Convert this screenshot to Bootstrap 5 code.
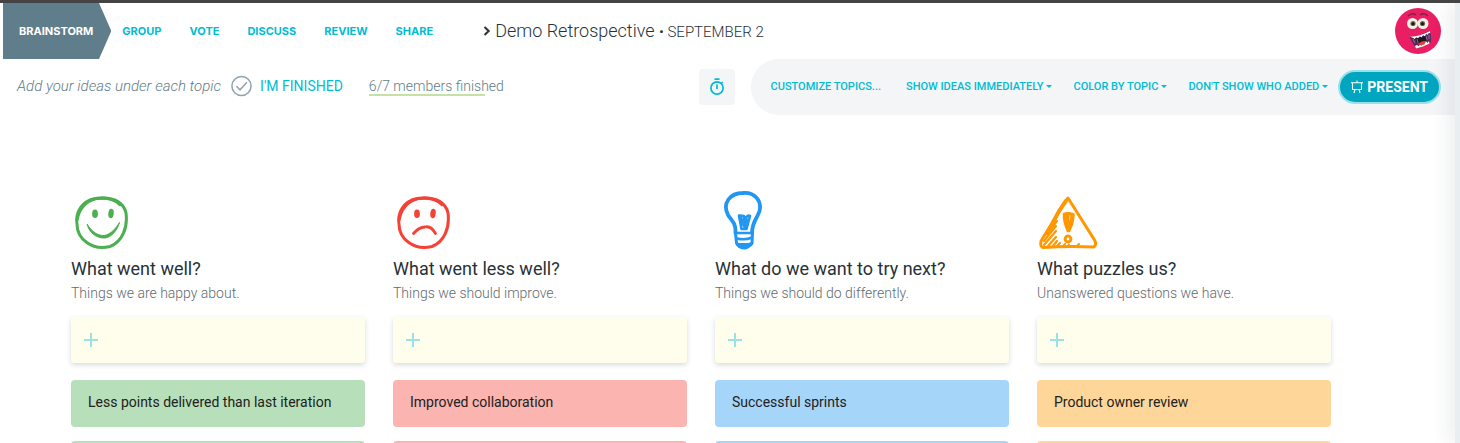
<!DOCTYPE html>
<html lang="en">
<head>
<meta charset="utf-8">
<meta name="viewport" content="width=device-width, initial-scale=1">
<title>Demo Retrospective</title>
<link rel="stylesheet" href="https://cdn.jsdelivr.net/npm/bootstrap@5.3.0/dist/css/bootstrap.min.css">
<style>
  :root { --accent: #00bcd4; --slate: #607d8b; --ink: #263238; --panel: #f3f5f7; }
  body { font-family: Roboto, "Liberation Sans", sans-serif; color: var(--ink); background: #fff; }
  a { color: var(--accent); }
  svg { display: block; flex: none; }
  .app-shell { border-top: 3px solid #444; }
  .side-drawer { width: 5px; background: #e9eef1; box-shadow: 0 0 20px rgba(38, 50, 56, .3); }

  .step-bar { height: 56px; padding-left: 3px; padding-right: 14px; }
  .steps a { font-family: Inter, sans-serif; font-size: 11px; font-weight: 700; line-height: 56px; margin-left: 28px; }
  .steps a.step-now { color: #fff; background: var(--slate); margin-left: 0; margin-right: -17px; padding: 0 18px 0 16px;
    clip-path: polygon(0 0, 96px 0, 100% 50%, 96px 100%, 0 100%); }
  .session-title { font-size: 18px; font-weight: 300; line-height: 24px; margin-left: 50px; }
  .session-date { font-size: 15px; }

  .tool-bar { height: 56px; padding-left: 17px; }
  .hint { font-size: 15px; line-height: 20px; font-weight: 300; font-style: italic; color: var(--slate); }
  .finish-btn { font-size: 14px; line-height: 20px; color: var(--accent); margin-left: 10px; }
  .status-line { padding-bottom: 2px; }
  .member-count { font-size: 14px; font-weight: 300; line-height: 20px; color: var(--slate); margin-left: 26px;
    background: linear-gradient(#c5e1a5, #c5e1a5) left bottom / 86% 2px no-repeat; }
  .timer-btn { width: 36px; height: 36px; background: var(--panel); margin-right: 16px; }
  .options { background: var(--panel); border-radius: 28px 0 0 28px; padding-left: 20px; padding-right: 14px; }
  .option-btn { font-size: 11px; font-weight: 500; color: var(--accent); margin-right: 21px; }
  .option-btn.option-wide { margin-right: 25px; }
  .option-btn.dropdown-toggle::after { margin-left: 3px; vertical-align: 2px; border-width: 3px; border-bottom: 0; }
  .present-btn { height: 34px; font-size: 14px; font-weight: 700; color: #fff; background: #00a5c0;
    border: 2px solid #99e0ea; border-radius: 17px; padding: 0 11px; margin-left: -11px; }

  .board { padding: 76px 124px 0 71px; scrollbar-width: none; }
  .board-grid { display: grid; grid-template-columns: repeat(4, 1fr); gap: 28px; }
  .topic-name { font-size: 18px; font-weight: 400; line-height: 24px; margin: 6px 0 0; }
  .topic-note { font-size: 14px; font-weight: 300; line-height: 20px; color: #5f6b70; margin: 2px 0 14px; }
  .add-idea { height: 46px; background: #fffeec; border-radius: 3px; padding: 0 13px; box-shadow: 0 2px 5px rgba(38, 50, 56, .18); margin-bottom: 17px; }
  .add-idea input { background: none; outline: 0; min-width: 0; font-size: 14px; }
  .idea { font-size: 14px; line-height: 20px; color: #212121; border-radius: 4px; padding: 12px 17px 15px; margin-bottom: 14px; }
  .topic-well .idea { background: #b7dfb9; }
  .topic-less .idea { background: #fbb4b0; }
  .topic-next .idea { background: #a6d5fa; }
  .topic-puzzle .idea { background: #ffd699; }
</style>
</head>
<body>
<div class="app-shell d-flex vh-100 overflow-hidden">
  <div class="d-flex flex-column flex-grow-1 overflow-hidden">
    <header class="step-bar d-flex align-items-center flex-shrink-0">
      <nav class="steps d-flex" aria-label="Steps">
        <a href="#brainstorm" class="step-now text-decoration-none" aria-current="step">BRAINSTORM</a>
        <a href="#group" class="text-decoration-none">GROUP</a>
        <a href="#vote" class="text-decoration-none">VOTE</a>
        <a href="#discuss" class="text-decoration-none">DISCUSS</a>
        <a href="#review" class="text-decoration-none">REVIEW</a>
        <a href="#share" class="text-decoration-none">SHARE</a>
      </nav>
      <h1 class="session-title d-flex align-items-center mb-0">
        <svg width="8" height="10" viewBox="0 0 8 10" class="me-1" fill="none" stroke="#263238" stroke-width="2" aria-hidden="true"><path d="M1.500 1 5.700 5 1.500 9"/></svg>
        <span>Demo Retrospective <span class="session-date">• SEPTEMBER 2</span></span>
      </h1>
      <button type="button" class="btn p-0 border-0 rounded-circle ms-auto" aria-label="Account">
        <svg width="46" height="46" viewBox="0 0 46 46" aria-hidden="true">
          <circle cx="23" cy="23" r="23" fill="#e91e63"/>
          <path d="M13 8q4-4 8-1M25 7q4-3 8 1" fill="none" stroke="#80223f" stroke-width="1.300"/>
          <circle cx="17.500" cy="15.500" r="5.500" fill="#f2f0e6"/><circle cx="28" cy="15.500" r="5.500" fill="#f2f0e6"/>
          <circle cx="18" cy="15.500" r="2.600" fill="#6d6a4c"/><circle cx="27.500" cy="15.500" r="2.600" fill="#6d6a4c"/>
          <circle cx="18" cy="15.700" r="1.500" fill="#15151a"/><circle cx="27.500" cy="15.700" r="1.500" fill="#15151a"/>
          <path d="M14.500 29Q26 28 35 22.500 37 31 35.500 35 27 39 21 40.500 17 34 14.500 29Z" fill="#5a2a5c"/>
          <path d="M20 30.500 31 27.500 32 32 26 35 22 35Z" fill="#20141f"/>
          <path d="M15 28.800Q26 28 35 23L35.300 25.300 33.500 25 33 26.800 31 26 30 28.200 28 27.200 26.500 29.400 25 28.300 23 30.300 21.500 29.300 19.500 31 18.500 30Z" fill="#fff"/>
          <path d="M18 31 20 35M22 31 23 35M31 28 32 32M34 27 34 31" stroke="#a77bb0" stroke-width=".8"/>
          <path d="M23 36Q27 32 32 33.500L31 37 25 39Z" fill="#d9413d"/>
          <path d="M20 38 22 37 23.500 38.300 25 37 26.500 37.800 28 36.500 29 37 31 33.500 32.500 35 34 33 34.500 35.500 28 38.500 21 40.500Z" fill="#fff"/>
        </svg>
      </button>
    </header>

    <div class="tool-bar d-flex align-items-stretch flex-shrink-0">
      <div class="d-flex align-items-center flex-grow-1 text-nowrap">
        <div class="status-line d-flex align-items-center">
          <span class="hint">Add your ideas under each topic</span>
          <button type="button" class="finish-btn btn p-0 border-0 d-flex align-items-center gap-2">
            <svg width="21" height="22" viewBox="0 0 21 22" fill="none" stroke="#90a4ae" stroke-width="1.500" aria-hidden="true"><circle cx="10.500" cy="11" r="9.600"/><path d="M5.500 11.300 9 14.800 16 7.300"/></svg>
            I'M FINISHED
          </button>
          <span class="member-count">6/7 members finished</span>
        </div>
        <button type="button" class="timer-btn btn p-0 border-0 rounded-1 ms-auto d-flex align-items-center justify-content-center" aria-label="Timer">
          <svg width="16" height="18" viewBox="0 0 16 18" fill="none" stroke="#00bcd4" stroke-width="1.700" aria-hidden="true"><circle cx="8" cy="10" r="6.100"/><path d="M5.500 1.200h5M8 6.500V11M12.400 5.300 13.700 4"/></svg>
        </button>
      </div>
      <div class="options d-flex align-items-center text-nowrap">
        <button type="button" class="option-btn option-wide btn p-0 border-0">CUSTOMIZE TOPICS...</button>
        <button type="button" class="option-btn btn p-0 border-0 dropdown-toggle">SHOW IDEAS IMMEDIATELY</button>
        <button type="button" class="option-btn btn p-0 border-0 dropdown-toggle">COLOR BY TOPIC</button>
        <button type="button" class="option-btn btn p-0 border-0 dropdown-toggle">DON'T SHOW WHO ADDED</button>
        <button type="button" class="present-btn btn d-flex align-items-center gap-1">
          <svg width="12" height="14" viewBox="0 0 12 14" fill="none" stroke="#fff" stroke-width="1.100" aria-hidden="true"><path d="M1.500 3v6.500h9V3M0 2.700h12M6 .5v2M4 9.500 3 13M8 9.500 9 13"/></svg>
          PRESENT
        </button>
      </div>
    </div>

    <main class="board flex-grow-1 overflow-auto">
      <div class="board-grid">
        <section class="topic-well">
          <svg width="60" height="60" viewBox="0 0 60 60" fill="none" stroke="#4caf50" stroke-linecap="round" stroke-linejoin="round" aria-hidden="true">
            <path d="M6 33C4 17 15 7 30 7 43 6 53 12 55 22 57 37 51 51 39 55.500 21 60 6 48 6 33Z" stroke-width="3"/>
            <path d="M6 29Q9 12 25 7.500 41 5.500 49 13.500" stroke-width="3.200"/>
            <ellipse cx="24" cy="22.700" rx="2.900" ry="4.300" fill="#4caf50" stroke="none"/><ellipse cx="40" cy="22.500" rx="2.700" ry="4.700" fill="#4caf50" stroke="none" transform="rotate(8 40 22.500)"/>
            <path d="M16.300 33.500C21 41 27 44.800 33 44.500 40 43.500 45 37 48.500 31.500 46 40 40 46.500 34 47 26 47.500 18 42 16.300 33.500Z" fill="#4caf50" stroke-width="1"/>
          </svg>
          <h2 class="topic-name">What went well?</h2>
          <p class="topic-note">Things we are happy about.</p>
          <label class="add-idea d-flex align-items-center gap-2">
            <svg width="14" height="14" viewBox="0 0 14 14" stroke="#99e2e8" stroke-width="2" aria-hidden="true"><path d="M7 0v14M0 7h14"/></svg>
            <input type="text" class="border-0 flex-grow-1" aria-label="Add an idea to What went well?">
          </label>
          <div class="idea">Less points delivered than last iteration</div>
          <div class="idea">&nbsp;</div>
        </section>

        <section class="topic-less">
          <svg width="60" height="60" viewBox="0 0 60 60" fill="none" stroke="#f44336" stroke-linecap="round" stroke-linejoin="round" aria-hidden="true">
            <path d="M6 33C4 17 15 7 30 7 43 6 53 12 55 22 57 37 51 51 39 55.500 21 60 6 48 6 33Z" stroke-width="3"/>
            <path d="M6 29Q9 12 25 7.500 41 5.500 49 13.500" stroke-width="3.200"/>
            <ellipse cx="24" cy="22.700" rx="2.900" ry="4.300" fill="#f44336" stroke="none"/><ellipse cx="40" cy="22.500" rx="2.700" ry="4.700" fill="#f44336" stroke="none" transform="rotate(8 40 22.500)"/>
            <path d="M20.500 42.500Q26 36 32 36 38 34.500 42.500 42.500" stroke-width="2.800"/>
          </svg>
          <h2 class="topic-name">What went less well?</h2>
          <p class="topic-note">Things we should improve.</p>
          <label class="add-idea d-flex align-items-center gap-2">
            <svg width="14" height="14" viewBox="0 0 14 14" stroke="#99e2e8" stroke-width="2" aria-hidden="true"><path d="M7 0v14M0 7h14"/></svg>
            <input type="text" class="border-0 flex-grow-1" aria-label="Add an idea to What went less well?">
          </label>
          <div class="idea">Improved collaboration</div>
          <div class="idea">&nbsp;</div>
        </section>

        <section class="topic-next">
          <svg width="60" height="60" viewBox="0 0 60 60" fill="none" stroke="#2196f3" stroke-linecap="round" stroke-linejoin="round" aria-hidden="true">
            <path d="M20.500 42C21 32 17 30 13 24 7 12 15 2 28 2 40 1 47 10 44.500 20 42 28 37 31 37 42" stroke-width="3.800"/>
            <path d="M20.500 42 21.500 52Q24 57 30 57 34 56 37 52L37.500 42" stroke-width="3"/>
            <path d="M22 42H37M22 47.500Q30 49.500 37 46.500" stroke-width="2.600"/>
            <path d="M22 53Q30 54 37 52.500L35 54.500Q30 58 24 55.500Z" fill="#2196f3" stroke-width="2.600"/>
            <path d="M24 24.500 26.500 38H31.500L35 25Q33 24 31.500 26L29.500 36 29 25 25 24.500 29 35M31 26 32 31" stroke-width="2.600"/>
          </svg>
          <h2 class="topic-name">What do we want to try next?</h2>
          <p class="topic-note">Things we should do differently.</p>
          <label class="add-idea d-flex align-items-center gap-2">
            <svg width="14" height="14" viewBox="0 0 14 14" stroke="#99e2e8" stroke-width="2" aria-hidden="true"><path d="M7 0v14M0 7h14"/></svg>
            <input type="text" class="border-0 flex-grow-1" aria-label="Add an idea to What do we want to try next?">
          </label>
          <div class="idea">Successful sprints</div>
          <div class="idea">&nbsp;</div>
        </section>

        <section class="topic-puzzle">
          <svg width="62" height="60" viewBox="0 0 62 60" fill="none" stroke="#ff9800" stroke-linecap="round" stroke-linejoin="round" aria-hidden="true">
            <path d="M30.500 7.500Q27 11 23 19L4 50Q3 56 6 56.500 30 55 57 56 60 53 57.500 49L31 7Z" stroke-width="3"/>
            <path d="M29 10Q22 19 16 31" stroke-width="3.800"/>
            <path d="M21 24 12 38M20 30 10 43M19 35 7 50M19 40 7 54M19 46 11 55M20 50 16 55M23 52 20 55M28 53 26 55M32 54 31 55M42 53 40 55" stroke-width="2.200"/>
            <path d="M26.500 22.500Q31 21 37 23 37 31 32.500 40.500L30.500 40.500Q26 31 26.500 22.500Z" fill="#ff9800" stroke-width="1.500"/>
            <path d="M33 24.500 32.500 29" stroke="#fff" stroke-width=".6"/>
            <circle cx="31" cy="48" r="2.900" stroke-width="3"/>
          </svg>
          <h2 class="topic-name">What puzzles us?</h2>
          <p class="topic-note">Unanswered questions we have.</p>
          <label class="add-idea d-flex align-items-center gap-2">
            <svg width="14" height="14" viewBox="0 0 14 14" stroke="#99e2e8" stroke-width="2" aria-hidden="true"><path d="M7 0v14M0 7h14"/></svg>
            <input type="text" class="border-0 flex-grow-1" aria-label="Add an idea to What puzzles us?">
          </label>
          <div class="idea">Product owner review</div>
          <div class="idea">&nbsp;</div>
        </section>
      </div>
    </main>
  </div>
  <aside class="side-drawer flex-shrink-0 position-relative" aria-label="Side panel"></aside>
</div>
<script src="https://cdn.jsdelivr.net/npm/bootstrap@5.3.0/dist/js/bootstrap.bundle.min.js"></script>
</body>
</html>
